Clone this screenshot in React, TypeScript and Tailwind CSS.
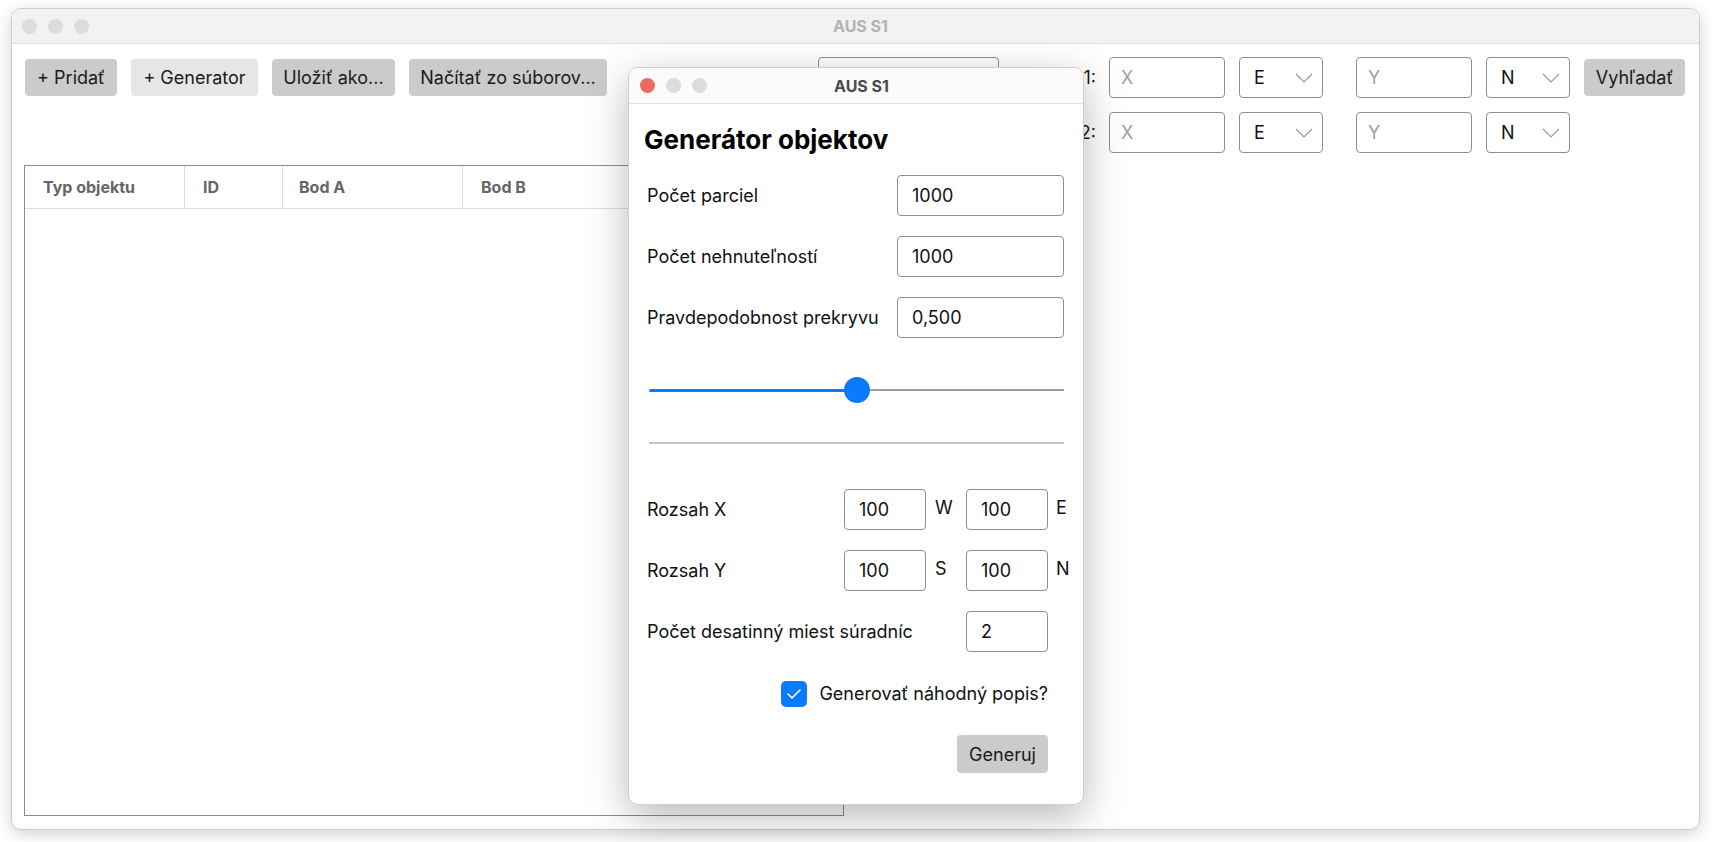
import React from "react";

const mainFont = { fontFamily: "Inter, 'Noto Sans', sans-serif" };
const dlgFont = { fontFamily: "Inter, 'Noto Sans', sans-serif" };

function Lights({ active }: { active?: boolean }) {
  return (
    <div className="flex items-center gap-[11px]">
      <span className={`block w-[15px] h-[15px] rounded-full ${active ? "bg-[#ec6a5e]" : "bg-[#dcdcdc]"}`} />
      <span className="block w-[15px] h-[15px] rounded-full bg-[#dcdcdc]" />
      <span className="block w-[15px] h-[15px] rounded-full bg-[#dcdcdc]" />
    </div>
  );
}

function Chevron() {
  return (
    <svg width="18" height="10" viewBox="0 0 18 10">
      <polyline points="1,1 9,9 17,1" fill="none" stroke="#9a9a9a" strokeWidth="1.2" />
    </svg>
  );
}

function Field({ ph, w }: { ph: string; w: string }) {
  return (
    <div className={`${w} h-[41px] border border-[#8e8e8e] rounded-[4px] bg-white flex items-center pl-[11px] text-[18px] text-[#a0a0a0]`}>
      {ph}
    </div>
  );
}

function Select({ v }: { v: string }) {
  return (
    <div className="w-[84px] h-[41px] border border-[#8e8e8e] rounded-[4px] bg-white flex items-center justify-between pl-[14px] pr-[9px] text-[18px] text-[#111]">
      <span>{v}</span>
      <Chevron />
    </div>
  );
}

function Btn({ label, w, light }: { label: string; w: string; light?: boolean }) {
  return (
    <button
      type="button"
      className={`${w} h-[37px] mt-[2px] rounded-[4px] text-[18px] text-[#1a1a1a] flex items-center justify-center ${light ? "bg-[#e6e6e6]" : "bg-[#cbcbcb]"}`}
    >
      {label}
    </button>
  );
}

function SearchRow({ n, withBtn }: { n: string; withBtn?: boolean }) {
  return (
    <div className="flex items-start">
      <div className="w-[84px] h-[41px] flex items-center justify-end text-[18px] text-[#1a1a1a] whitespace-nowrap">Bod {n}:</div>
      <div className="ml-[13px]"><Field ph="X" w="w-[116px]" /></div>
      <div className="ml-[14px]"><Select v="E" /></div>
      <div className="ml-[33px]"><Field ph="Y" w="w-[116px]" /></div>
      <div className="ml-[14px]"><Select v="N" /></div>
      {withBtn && <div className="ml-[14px]"><Btn label="Vyhľadať" w="w-[101px]" /></div>}
    </div>
  );
}

function DInput({ v, w }: { v: string; w: string }) {
  return (
    <div className={`${w} h-[41px] border border-[#8e8e8e] rounded-[4px] bg-white flex items-center pl-[14px] text-[18px] text-[#111]`}>
      {v}
    </div>
  );
}

function Dialog() {
  return (
    <div
      className="absolute left-[628px] top-[67px] w-[456px] h-[738px] rounded-[10px] bg-white border border-[#cfcfcf] shadow-[0_12px_40px_rgba(0,0,0,0.28)] flex flex-col overflow-hidden"
      style={dlgFont}
    >
      <div className="h-[36px] shrink-0 bg-[#fbfbfb] border-b border-[#e2e2e2] grid grid-cols-[1fr_auto_1fr] items-center pl-[11px]">
        <Lights active />
        <div className="text-[16px] font-bold text-[#4a4a4a]">AUS S1</div>
        <div />
      </div>
      <div className="flex flex-col pl-[18px] pr-[19px] text-[18px] text-[#111]">
        <div className="mt-[20px] h-[32px] leading-[32px] text-[26px] font-bold text-black -ml-[3px]">Generátor objektov</div>
        <div className="mt-[19px] flex flex-col gap-[20px]">
          {[
            ["Počet parciel", "1000"],
            ["Počet nehnuteľností", "1000"],
            ["Pravdepodobnost prekryvu", "0,500"],
          ].map(([l, v]) => (
            <div key={l} className="flex items-center justify-between h-[41px]">
              <span>{l}</span>
              <DInput v={v} w="w-[167px]" />
            </div>
          ))}
        </div>
        <div className="mt-[39px] ml-[2px] relative h-[26px] flex items-center">
          <div className="h-[3px] w-1/2 bg-[#0a7aff] rounded-l-full" />
          <div className="h-[2px] w-1/2 bg-[#9d9d9d]" />
          <div className="absolute left-1/2 top-0 -ml-[13px] w-[26px] h-[26px] rounded-full bg-[#0a7aff]" />
        </div>
        <div className="mt-[39px] ml-[2px] h-[2px] bg-[#c6c6c6]" />
        <div className="mt-[45px] grid grid-cols-[1fr_82px_40px_82px_32px] gap-y-[20px] -mr-[16px]">
          <div className="h-[41px] flex items-center">Rozsah X</div>
          <DInput v="100" w="w-[82px]" />
          <div className="pl-[9px] pt-[5px]">W</div>
          <DInput v="100" w="w-[82px]" />
          <div className="pl-[8px] pt-[5px]">E</div>
          <div className="h-[41px] flex items-center">Rozsah Y</div>
          <DInput v="100" w="w-[82px]" />
          <div className="pl-[9px] pt-[5px]">S</div>
          <DInput v="100" w="w-[82px]" />
          <div className="pl-[8px] pt-[5px]">N</div>
          <div className="h-[41px] flex items-center col-span-3 whitespace-nowrap">Počet desatinný miest súradníc</div>
          <DInput v="2" w="w-[82px]" />
          <div />
        </div>
        <div className="mt-[28px] flex items-center justify-end gap-[12px] pr-[16px]">
          <div className="w-[26px] h-[26px] rounded-[5px] bg-[#0a7aff] flex items-center justify-center">
            <svg width="16" height="12" viewBox="0 0 16 12">
              <polyline points="2,6 6,10 14,2" fill="none" stroke="white" strokeWidth="1.6" strokeLinecap="round" strokeLinejoin="round" />
            </svg>
          </div>
          <span>Generovať náhodný popis?</span>
        </div>
        <div className="mt-[28px] flex justify-end pr-[16px]">
          <button type="button" className="w-[91px] h-[38px] rounded-[4px] bg-[#cbcbcb] text-[18px] text-[#1a1a1a]">Generuj</button>
        </div>
      </div>
    </div>
  );
}

export default function App() {
  return (
    <div className="w-[1717px] h-[842px] bg-white relative overflow-hidden pt-[8px] pl-[11px]" style={mainFont}>
      <div className="w-[1689px] h-[822px] rounded-[10px] border border-[#cdcdcd] bg-white shadow-[0_4px_16px_rgba(0,0,0,0.18)] flex flex-col overflow-hidden">
        <div className="h-[35px] shrink-0 bg-[#f2f2f2] border-b border-[#dedede] grid grid-cols-[1fr_auto_1fr] items-center pl-[10px]">
          <Lights />
          <div className="text-[16px] font-bold text-[#b3b3b3]">AUS S1</div>
          <div />
        </div>
        <div className="flex-1 flex flex-col pl-[12px] pt-[13px] pb-[13px]">
          <div className="flex items-start">
            <div className="flex items-start gap-[14px] ml-[1px]">
              <Btn label="+ Pridať" w="w-[92px]" />
              <Btn label="+ Generator" w="w-[127px]" light />
              <Btn label="Uložiť ako..." w="w-[123px]" />
              <Btn label="Načítať zo súborov..." w="w-[198px]" />
            </div>
            <div className="ml-[211px] w-[181px] h-[41px] border border-[#8e8e8e] rounded-[4px] bg-white" />
            <div className="ml-[13px] flex flex-col gap-[14px]">
              <SearchRow n="1" withBtn />
              <SearchRow n="2" />
            </div>
          </div>
          <div className="mt-[12px] w-[820px] flex-1 border border-[#8c8c8c] flex flex-col">
            <div className="h-[43px] border-b border-[#dcdcdc] flex text-[16px] font-bold text-[#666]">
              <div className="w-[160px] border-r border-[#dcdcdc] flex items-center pl-[18px]">Typ objektu</div>
              <div className="w-[98px] border-r border-[#dcdcdc] flex items-center pl-[18px]">ID</div>
              <div className="w-[180px] border-r border-[#dcdcdc] flex items-center pl-[16px]">Bod A</div>
              <div className="flex-1 flex items-center pl-[18px]">Bod B</div>
            </div>
          </div>
        </div>
      </div>
      <Dialog />
    </div>
  );
}
